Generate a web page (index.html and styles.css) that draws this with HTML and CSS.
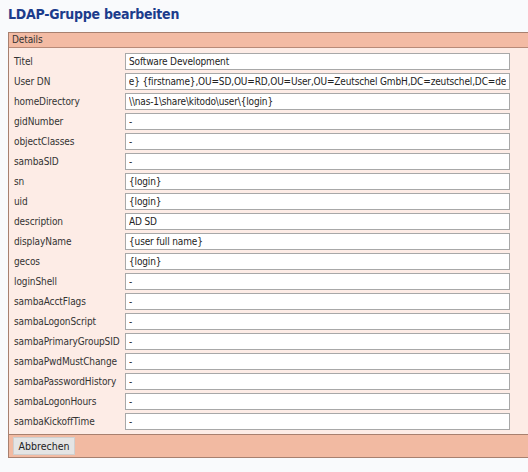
FILE: index.html
```html
<!DOCTYPE html>
<html lang="de">
<head>
  <meta charset="UTF-8" />
  <title>LDAP-Gruppe bearbeiten</title>
  <link rel="stylesheet" href="styles.css">
</head>
<body>

  <h1 class="page-title">LDAP-Gruppe bearbeiten</h1>

  <!-- Details panel -->
  <div class="panel">
    <div class="panel-head">Details</div>
    <div class="panel-body">
      <label>Titel</label><input type="text" value="Software Development">
      <label>User DN</label><input type="text" id="userDn" value="CN={lastname} {firstname},OU=SD,OU=RD,OU=User,OU=Zeutschel GmbH,DC=zeutschel,DC=de">
      <label>homeDirectory</label><input type="text" value="\\nas-1\share\kitodo\user\{login}">
      <label>gidNumber</label><input type="text" value="-">
      <label>objectClasses</label><input type="text" value="-">
      <label>sambaSID</label><input type="text" value="-">
      <label>sn</label><input type="text" value="{login}">
      <label>uid</label><input type="text" value="{login}">
      <label>description</label><input type="text" value="AD SD">
      <label>displayName</label><input type="text" value="{user full name}">
      <label>gecos</label><input type="text" value="{login}">
      <label>loginShell</label><input type="text" value="-">
      <label>sambaAcctFlags</label><input type="text" value="-">
      <label>sambaLogonScript</label><input type="text" value="-">
      <label>sambaPrimaryGroupSID</label><input type="text" value="-">
      <label>sambaPwdMustChange</label><input type="text" value="-">
      <label>sambaPasswordHistory</label><input type="text" value="-">
      <label>sambaLogonHours</label><input type="text" value="-">
      <label>sambaKickoffTime</label><input type="text" value="-">
    </div>
    <div class="panel-foot">
      <button>Abbrechen</button>
    </div>
  </div>

  <script>
    // show the end of the long DN like the scrolled field
    var dn = document.getElementById('userDn');
    dn.scrollLeft = dn.scrollWidth;
  </script>

</body>
</html>
```

FILE: styles.css
```css
* { box-sizing: border-box; margin: 0; padding: 0; }
html, body { overflow: hidden; }
body { background: #f9fafc; font-family: "DejaVu Sans Condensed", "DejaVu Sans", sans-serif; font-size: 10px; letter-spacing: -0.1px; color: #333; width: 528px; height: 472px; }
.page-title { font-size: 14px; font-weight: bold; letter-spacing: -0.25px; color: #1c3c8c; margin: 0 0 0 8px; padding-top: 6px; height: 32px; line-height: 16px; }
.panel { margin-left: 8px; width: 540px; background: #fdece6; border: 1px solid #a8806f; border-right: none; }
.panel-head { background: #f3bba4; border-bottom: 1px solid #b88a78; height: 15px; line-height: 14px; padding-left: 3px; color: #333; }
.panel-body { display: grid; grid-template-columns: 111px 385px; row-gap: 3px; padding: 5px 0 4px 5px; align-items: center; }
.panel-body label { white-space: nowrap; }
.panel-body input { height: 17px; border: 1px solid #a8a8a8; background: #fff; font-family: inherit; font-size: 10px; letter-spacing: -0.15px; color: #222; padding: 0 3px; outline: none; }
.panel-foot { background: #f2baa2; border-top: 1px solid #a8806f; height: 23px; padding: 2px 0 0 4px; }
.panel-foot button { height: 18px; width: 62px; padding: 0; background: #e4e4e4; border: 1px solid #cfcfcf; font-family: inherit; font-size: 10.5px; color: #222; }
```
